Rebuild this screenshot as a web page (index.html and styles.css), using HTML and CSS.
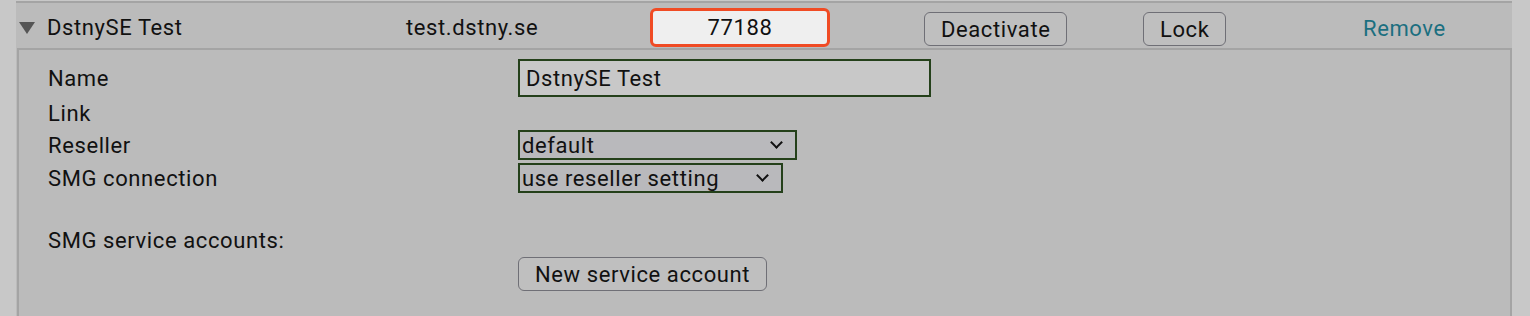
FILE: index.html
```html
<!DOCTYPE html>
<html lang="en">
<head>
    <meta charset="UTF-8">
    <title>Customer</title>
    <link rel="stylesheet" href="styles.css">
</head>
<body>
    <div class="panel">
        <div class="head-row">
            <div class="cell title"><span class="caret"></span>DstnySE Test</div>
            <div class="cell domain">test.dstny.se</div>
            <div class="cell"><input class="code-input" type="text" value="77188"></div>
            <div class="cell"><button class="btn">Deactivate</button></div>
            <div class="cell"><button class="btn">Lock</button></div>
            <div class="cell"><a class="remove" href="#">Remove</a></div>
        </div>

        <div class="detail">
            <div class="row row-name">
                <label>Name</label>
                <input class="text-input" type="text" value="DstnySE Test">
            </div>
            <div class="row row-link">
                <label>Link</label>
                <span></span>
            </div>
            <div class="row row-select">
                <label>Reseller</label>
                <div class="select reseller">default<span class="chev"></span></div>
            </div>
            <div class="row row-select row-smg">
                <label>SMG connection</label>
                <div class="select smg">use reseller setting<span class="chev"></span></div>
            </div>
            <div class="accounts-label">SMG service accounts:</div>
            <div class="new-account">
                <button class="btn btn-wide">New service account</button>
            </div>
        </div>
    </div>
</body>
</html>
```

FILE: styles.css
```css
body {
    margin: 0;
    padding-top: 1px;
    background-color: #c8c8c8;
    font-family: Roboto, "Liberation Sans", sans-serif;
    font-size: 22px;
    letter-spacing: 0.6px;
    color: #111;
}
.panel {
    margin-left: 16px;
    width: 1496px;
    height: 315px;
    background-color: #bbbbbb;
    border-top: 2px solid #a4a4a4;
    overflow: hidden;
}
.head-row {
    display: grid;
    grid-template-columns: 387px 244px 274px 219px 220px auto;
    align-items: center;
    height: 45px;
    padding-left: 3px;
}
.cell {
    display: flex;
    align-items: center;
}
.title {
    padding-top: 4px;
}
.domain {
    padding-top: 4px;
}
.caret {
    width: 0;
    height: 0;
    border-left: 8px solid transparent;
    border-right: 8px solid transparent;
    border-top: 12px solid #555;
    margin-right: 12px;
}
.code-input {
    width: 174px;
    height: 33px;
    box-sizing: content-box;
    padding: 0;
    margin-top: 4px;
    border: 3px solid #f04b24;
    border-radius: 6px;
    background-color: #efefef;
    font-family: inherit;
    font-size: 22px;
    letter-spacing: 0.6px;
    text-align: center;
    color: #111;
}
.btn {
    background-color: #bfbfbf;
    border: 1px solid #6f6f76;
    border-radius: 6px;
    font-family: inherit;
    font-size: 22px;
    letter-spacing: 0.6px;
    color: #111;
    height: 34px;
    padding: 0 16px;
    margin-top: 7px;
}
.remove {
    color: #1b6f80;
    text-decoration: none;
    padding-top: 6px;
}
.detail {
    margin-left: 1px;
    border: 2px solid #a4a4a4;
    border-bottom: none;
    height: 300px;
    padding-left: 29px;
    padding-top: 9px;
}
.row {
    display: grid;
    grid-template-columns: 470px auto;
    align-items: center;
}
.row-name {
    height: 38px;
}
.row-link {
    height: 33px;
}
.row-select {
    height: 30px;
}
.row-smg {
    margin-top: 3px;
}
.text-input {
    width: 403px;
    height: 34px;
    box-sizing: content-box;
    padding: 0 0 0 6px;
    border: 2px solid #24401a;
    background-color: #c8c8c8;
    font-family: inherit;
    font-size: 22px;
    letter-spacing: 0.6px;
    color: #111;
}
.select {
    display: flex;
    align-items: center;
    justify-content: space-between;
    box-sizing: border-box;
    height: 30px;
    border: 2px solid #24401a;
    background-color: #b9b9bc;
    padding: 0 14px 0 2px;
}
.reseller {
    width: 279px;
}
.smg {
    width: 265px;
}
.chev {
    width: 7px;
    height: 7px;
    border-right: 2px solid #111;
    border-bottom: 2px solid #111;
    transform: rotate(45deg);
    margin-top: -6px;
}
.accounts-label {
    margin-top: 37px;
    height: 22px;
    line-height: 22px;
}
.new-account {
    margin-left: 470px;
    margin-top: 5px;
}
.btn-wide {
    margin-top: 0;
}
```
